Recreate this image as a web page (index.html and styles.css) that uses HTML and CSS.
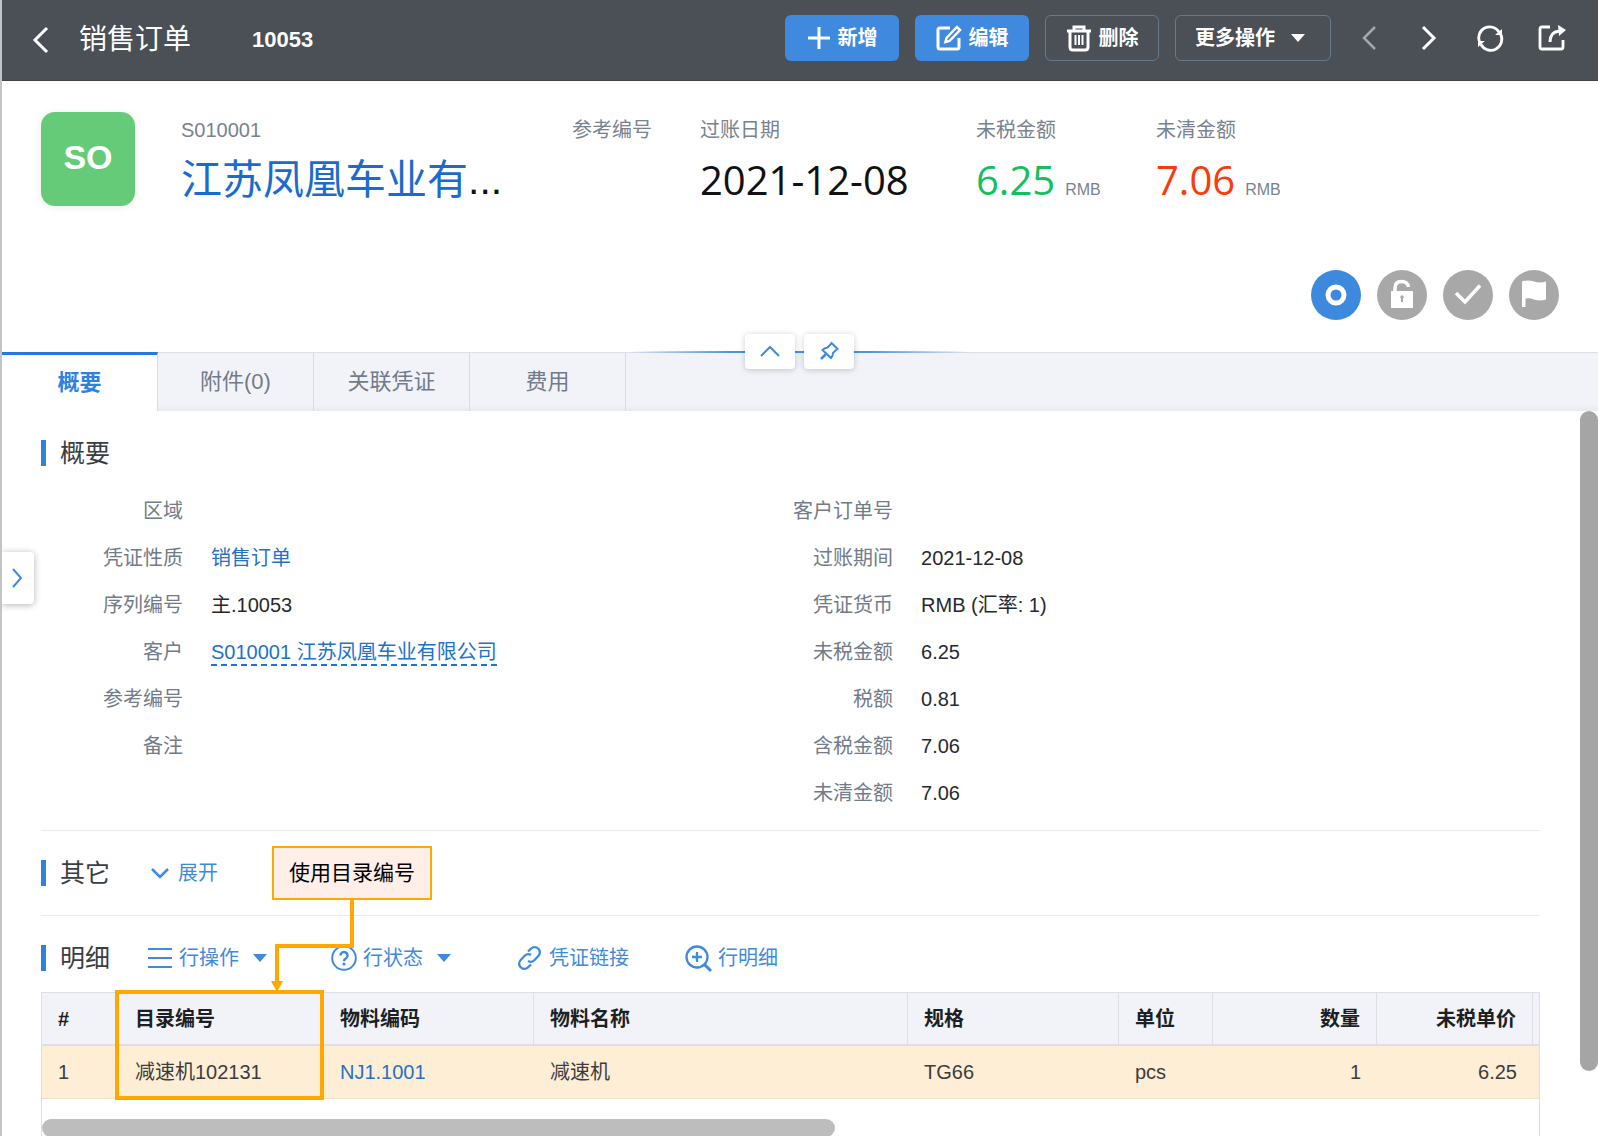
FILE: index.html
```html
<!DOCTYPE html>
<html lang="zh-CN">
<head>
<meta charset="utf-8">
<meta name="viewport" content="width=device-width, initial-scale=1">
<title>销售订单 10053</title>
<link rel="stylesheet" href="styles.css">
</head>
<body>
<div class="app">
  <header class="topbar">
    <button class="icon-btn back" aria-label="返回"><svg width="18" height="28" viewBox="0 0 18 28"><path d="M15 2 3 14l12 12" stroke-width="3"/></svg></button>
    <h1 class="topbar-title">销售订单</h1>
    <span class="topbar-no">10053</span>
    <div class="actions">
      <button class="btn btn-primary"><svg width="24" height="24" viewBox="0 0 24 24"><path d="M12 1v22M1 12h22" stroke-width="3"/></svg>新增</button>
      <button class="btn btn-primary"><svg width="26" height="26" viewBox="0 0 26 26"><path d="M14 3H4Q2 3 2 5v17q0 2 2 2h17q2 0 2-2v-9" stroke-width="3"/><path d="M9.500 17 10.500 13 21 2l3 3-10.500 11z" stroke-width="2.500"/></svg>编辑</button>
      <button class="btn btn-outline"><svg width="26" height="26" viewBox="0 0 26 26"><path d="M1 6h24" stroke-width="3"/><path d="M8 5V2h10v3M4 6v16q0 3 3 3h12q3 0 3-3V6" stroke-width="3"/><path d="M9.500 10v10M13 10v10M16.500 10v10" stroke-width="2"/></svg>删除</button>
      <button class="btn btn-outline btn-more">更多操作<i class="caret"></i></button>
    </div>
    <nav class="pager">
      <button class="icon-btn dim" aria-label="上一条"><svg width="26" height="28" viewBox="0 0 26 28"><path d="M19 3 8 14l11 11" stroke-width="2.500"/></svg></button>
      <button class="icon-btn" aria-label="下一条"><svg width="26" height="28" viewBox="0 0 26 28"><path d="M7 3l11 11L7 25" stroke-width="3"/></svg></button>
      <button class="icon-btn" aria-label="刷新"><svg width="28" height="28" viewBox="0 0 28 28"><path d="M3.500 18A11 11 0 0 1 23 8M24.500 10a11 11 0 0 1-19.500 10.500" stroke-width="2.800"/><path d="M26 5v6h-7zM2 23v-6h7z" fill="currentColor" stroke="none"/></svg></button>
      <button class="icon-btn" aria-label="导出"><svg width="28" height="28" viewBox="0 0 28 28"><path d="M12 3H4Q2 3 2 5v18q0 2 2 2h19q2 0 2-2v-7" stroke-width="2.800"/><path d="M12 18Q12 8 21 7" stroke-width="3"/><path d="M20 1l8 5-7 6z" fill="currentColor" stroke="none"/></svg></button>
    </nav>
  </header>

  <section class="summary">
    <div class="summary-main">
      <div class="logo">SO</div>
      <div class="fact fact-name"><span class="fact-label">S010001</span><div class="fact-value customer"><a href="#">江苏凤凰车业有</a>...</div></div>
      <div class="fact fact-ref"><span class="fact-label">参考编号</span></div>
      <div class="fact fact-date"><span class="fact-label">过账日期</span><div class="fact-value">2021-12-08</div></div>
      <div class="fact fact-net"><span class="fact-label">未税金额</span><div class="fact-value green">6.25<small>RMB</small></div></div>
      <div class="fact"><span class="fact-label">未清金额</span><div class="fact-value red">7.06<small>RMB</small></div></div>
    </div>
    <div class="statuses">
      <span class="status on"><svg width="50" height="50" viewBox="0 0 50 50"><circle cx="25" cy="25" r="8" stroke-width="5"/></svg></span>
      <span class="status"><svg width="50" height="50" viewBox="0 0 50 50"><path d="M18 22v-4q0-6.500 6.500-6.500 6 0 7 5.500" stroke-width="3.500"/><path d="M14 21h22v17H14z" fill="currentColor" stroke="none"/><path d="M24 32v-3.500a1.700 1.700 0 1 1 2 0V32z" fill="#a8a8a8" stroke="none"/></svg></span>
      <span class="status"><svg width="50" height="50" viewBox="0 0 50 50"><path d="M13 23l9 9 15-16.500" stroke-width="3.500"/></svg></span>
      <span class="status"><svg width="50" height="50" viewBox="0 0 50 50"><path d="M13 11.500q6-2 12 0t12 0v18q-6 2-12 0-4-2-8.500-1V37H13z" fill="currentColor" stroke="none"/></svg></span>
    </div>
  </section>

  <nav class="tabs">
    <button class="tab active">概要</button><button class="tab">附件(0)</button><button class="tab">关联凭证</button><button class="tab">费用</button>
    <div class="fold">
      <button class="fold-btn" aria-label="收起"><svg width="20" height="14" viewBox="0 0 20 14"><path d="M1 11l9-9 9 9" stroke-width="2"/></svg></button>
      <button class="fold-btn" aria-label="固定"><svg width="20" height="20" viewBox="0 0 20 20"><path d="M12.500 1l6 6-2 1.500L14 11q0 3-2 5L3.500 8q2-2 5-2.500L11 3z" stroke-width="2"/><path d="M7 12l-5 5" stroke-width="2.500"/></svg></button>
    </div>
  </nav>

  <main class="body">
    <button class="drawer" aria-label="展开侧栏"><svg width="12" height="20" viewBox="0 0 12 20"><path d="M2 1l8 9-8 9" stroke-width="2"/></svg></button>
    <div class="content">
      <section class="section section-form">
        <h2 class="section-title">概要</h2>
        <div class="form">
          <dl class="fields">
            <dt>区域</dt><dd></dd>
            <dt>凭证性质</dt><dd><a href="#">销售订单</a></dd>
            <dt>序列编号</dt><dd>主.10053</dd>
            <dt>客户</dt><dd><a href="#" class="dashed">S010001 江苏凤凰车业有限公司</a></dd>
            <dt>参考编号</dt><dd></dd>
            <dt>备注</dt><dd></dd>
          </dl>
          <dl class="fields">
            <dt>客户订单号</dt><dd></dd>
            <dt>过账期间</dt><dd>2021-12-08</dd>
            <dt>凭证货币</dt><dd>RMB (汇率: 1)</dd>
            <dt>未税金额</dt><dd>6.25</dd>
            <dt>税额</dt><dd>0.81</dd>
            <dt>含税金额</dt><dd>7.06</dd>
            <dt>未清金额</dt><dd>7.06</dd>
          </dl>
        </div>
      </section>

      <section class="section section-other">
        <div class="section-head">
          <h2 class="section-title">其它</h2>
          <button class="tool tool-expand"><svg width="18" height="12" viewBox="0 0 18 12"><path d="M1 2l8 8 8-8" stroke-width="2.500"/></svg>展开</button>
        </div>
      </section>

      <section class="section section-lines">
        <div class="section-head">
          <h2 class="section-title">明细</h2>
          <div class="tools">
            <button class="tool tool-rows"><svg width="26" height="26" viewBox="0 0 26 26"><path d="M1 4h24M1 13h24M1 22h24" stroke-width="2"/></svg>行操作<i class="caret"></i></button>
            <button class="tool tool-state"><svg width="26" height="26" viewBox="0 0 26 26"><circle cx="13" cy="13" r="11.800" stroke-width="2"/><path d="M9.500 10.500a3.500 3.500 0 1 1 5.500 2.800q-2 1.200-2 3" stroke-width="2.500"/><circle cx="13" cy="19" r="1.600" fill="currentColor" stroke="none"/></svg>行状态<i class="caret"></i></button>
            <button class="tool tool-link"><svg width="26" height="26" viewBox="0 0 26 26"><path d="M11 6.500l3-2.800a5 5 0 0 1 7.300 0 5 5 0 0 1 0 7.300l-4 4.200a5 5 0 0 1-6.300.8M14 19.500l-3 2.800a5 5 0 0 1-7.300 0 5 5 0 0 1 0-7.300l4-4.200a5 5 0 0 1 6.300-.8" stroke-width="2.300"/></svg>凭证链接</button>
            <button class="tool"><svg width="27" height="27" viewBox="0 0 27 27"><circle cx="12" cy="12" r="10.500" stroke-width="2.300"/><path d="M12 7v10M7 12h10" stroke-width="2.300"/><path d="M19.500 19.500L26 26" stroke-width="3"/></svg>行明细</button>
          </div>
        </div>

        <div class="grid">
          <table>
            <colgroup><col class="c-no"><col class="c-cat"><col class="c-code"><col><col class="c-spec"><col class="c-unit"><col class="c-qty"><col class="c-price"><col class="c-end"></colgroup>
            <thead><tr><th>#</th><th>目录编号</th><th>物料编码</th><th>物料名称</th><th>规格</th><th>单位</th><th class="num">数量</th><th class="num">未税单价</th><th class="end"></th></tr></thead>
            <tbody><tr><td>1</td><td>减速机102131</td><td><a href="#">NJ1.1001</a></td><td>减速机</td><td>TG66</td><td>pcs</td><td class="num">1</td><td class="num">6.25</td><td class="end"></td></tr></tbody>
          </table>
          <div class="hscroll"></div>
          <div class="highlight"></div>
        </div>

        <div class="callout">使用目录编号</div>
        <svg class="connector" width="92" height="95" viewBox="0 0 92 95"><path d="M80 0v48H5v38" fill="none" stroke="#ffa800" stroke-width="4"/><path d="M-1 83h12L5 94z" fill="#ffa800" stroke="none"/></svg>
      </section>
    </div>
    <div class="vscroll"></div>
  </main>
</div>
</body>
</html>
```
FILE: styles.css
```css
* { box-sizing: border-box; }
body {
  margin: 0;
  font: 20px/30px "Liberation Sans", "Noto Sans CJK SC", sans-serif;
  color: #262a2e;
  background: #fff;
}
h1, h2, dl, dd { margin: 0; font-weight: 400; }
a { color: #2272cc; text-decoration: none; }
button { font: inherit; color: inherit; background: none; border: 0; padding: 0; cursor: pointer; }
svg { display: block; flex: none; fill: none; stroke: currentColor; overflow: visible; }

.app {
  height: 100vh;
  display: flex;
  flex-direction: column;
  overflow: hidden;
  border-left: 2px solid #c2c4c6;
}
.caret {
  width: 0;
  height: 0;
  border: 7px solid transparent;
  border-top: 8px solid currentColor;
  border-bottom: 0;
}

/* Top bar */
.topbar {
  flex: none;
  height: 81px;
  display: flex;
  align-items: center;
  padding: 0 32px 4px 30px;
  color: #fff;
  background: #4a5056;
  border-bottom: 1px solid #3d4349;
}
.back { padding-top: 4px; }
.topbar-title { margin-left: 29px; padding-top: 4px; font-size: 28px; line-height: 40px; }
.topbar-no { margin-left: 61px; padding-top: 4px; font-size: 22px; font-weight: 700; }
.actions { display: flex; gap: 16px; margin-left: auto; }
.btn {
  display: flex;
  align-items: center;
  justify-content: center;
  gap: 7px;
  width: 114px;
  height: 46px;
  border-radius: 6px;
  font-weight: 700;
}
.btn-primary { background: #3f8ade; }
.btn-outline { border: 1px solid #66788c; }
.btn-more { width: 156px; justify-content: space-between; padding: 0 25px 0 19px; }
.pager { display: flex; align-items: center; gap: 34px; margin-left: 25px; }
.dim { opacity: .5; }

/* Summary */
.summary {
  flex: none;
  height: 271px;
  display: flex;
  flex-direction: column;
  justify-content: space-between;
  padding: 31px 39px 32px 39px;
}
.summary-main { display: flex; }
.logo {
  width: 94px;
  height: 94px;
  margin-right: 46px;
  border-radius: 14px;
  background: #66cb79;
  box-shadow: 0 1px 8px rgba(0, 0, 0, .08);
  color: #fff;
  font-size: 34px;
  font-weight: 700;
  line-height: 90px;
  text-align: center;
}
.fact { padding-top: 3px; }
.fact-name { width: 391px; }
.fact-ref { width: 128px; }
.fact-date { width: 276px; }
.fact-net { width: 180px; }
.fact-label { display: block; color: #79828f; }
.fact-value {
  margin-top: 5px;
  font: 40px/60px "Open Sans", "Noto Sans CJK SC", sans-serif;
  color: #111;
}
.customer {
  font-family: "Liberation Sans", "Noto Sans CJK SC", sans-serif;
  font-size: 41px;
  white-space: nowrap;
}
.customer a { color: #1a6bcc; }
.green { color: #14bf5f; }
.red { color: #fa3c0c; }
.fact-value small { margin-left: 10px; font: 16px/20px "Liberation Sans", sans-serif; color: #79828f; }
.statuses { display: flex; justify-content: flex-end; gap: 16px; }
.status { width: 50px; height: 50px; border-radius: 50%; background: #a8a8a8; color: #fff; }
.status.on { background: #3c89de; }

/* Tabs */
.tabs {
  position: relative;
  flex: none;
  height: 59px;
  display: flex;
  border-top: 1px solid #dcdfe7;
  background: linear-gradient(#f1f3f8 52px, #e8eaef);
}
.tab {
  width: 156px;
  border-right: 1px solid #d9dce5;
  font-size: 22px;
  color: #727b88;
}
.tab.active {
  margin-top: -1px;
  border-top: 3px solid #2878dc;
  background: #fff;
  color: #2f80df;
  font-weight: 700;
}
.fold {
  position: absolute;
  top: -19px;
  left: 50%;
  width: 340px;
  margin-left: -171px;
  display: flex;
  justify-content: center;
  gap: 9px;
  background: linear-gradient(90deg, transparent, #4a92e4 30%, #4a92e4 70%, transparent) 0 17px / 100% 2px no-repeat;
}
.fold-btn {
  display: flex;
  align-items: center;
  justify-content: center;
  width: 50px;
  height: 35px;
  border-radius: 4px;
  background: #fff;
  box-shadow: 0 1px 6px rgba(0, 0, 0, .2);
  color: #3f8ade;
}

/* Body */
.body { position: relative; flex: 1; min-height: 0; display: flex; }
.content { flex: 1; min-width: 0; padding: 0 40px 0 39px; }
.vscroll { width: 18px; height: 91%; border-radius: 9px; background: #a5a5a5; }
.drawer {
  position: absolute;
  top: 141px;
  left: 0;
  display: flex;
  align-items: center;
  padding-left: 9px;
  width: 32px;
  height: 52px;
  border-radius: 0 4px 4px 0;
  background: #fff;
  box-shadow: 0 1px 7px rgba(0, 0, 0, .3);
  color: #3f8ade;
}
.section { padding-top: 24px; }
.section-form, .section-other { border-bottom: 1px solid #e9eaec; }
.section-form { padding-bottom: 14px; }
.section-other { padding-bottom: 24px; }
.section-head { display: flex; align-items: center; }
.section-title {
  display: flex;
  align-items: center;
  gap: 14px;
  font-size: 25px;
  line-height: 36px;
  color: #3a3d42;
}
.section-title::before { content: ""; width: 5px; height: 26px; background: #2f80df; }
.form { display: grid; grid-template-columns: 9fr 10fr; margin-top: 16px; }
.fields {
  display: grid;
  grid-template-columns: 142px 1fr;
  grid-auto-rows: 47px;
  column-gap: 28px;
  align-content: start;
  align-items: center;
}
.fields dt { color: #727b88; text-align: right; }
.dashed { padding-bottom: 1px; border-bottom: 2px dashed #2272cc; }

.tools { display: flex; margin-left: 37px; }
.tool { display: flex; align-items: center; gap: 6px; color: #3f8ade; }
.tool-expand { margin-left: 41px; gap: 9px; }
.tool .caret { margin-left: 8px; }
.tool-rows { width: 184px; }
.tool-state { width: 186px; }
.tool-link { width: 168px; }

/* Line table */
.section-lines { position: relative; }
.grid {
  position: relative;
  height: 180px;
  margin-top: 16px;
  border: 1px solid #dcdfe7;
}
table { width: 100%; table-layout: fixed; border-collapse: separate; border-spacing: 0; }
th, td { height: 53px; padding: 0 16px; text-align: left; white-space: nowrap; }
th {
  background: #f1f3f8;
  border-right: 1px solid #dcdfe7;
  border-bottom: 2px solid #dcdfe7;
  color: #1c1f23;
}
td { background: #ffeed6; border-bottom: 1px solid #eee0c6; color: #3c3c3c; }
.num { text-align: right; }
.end { padding: 0; border-right: 0; }
.c-no { width: 77px; }
.c-cat { width: 205px; }
.c-code { width: 210px; }
.c-spec { width: 211px; }
.c-unit { width: 94px; }
.c-qty { width: 164px; }
.c-price { width: 156px; }
.c-end { width: 6px; }
.hscroll { width: 53%; height: 18px; margin-top: 20px; border-radius: 9px; background: #bdbdbd; }

/* Annotation over the table */
.highlight {
  position: absolute;
  top: -3px;
  left: 73px;
  width: 209px;
  height: 110px;
  border: 4px solid #ffa800;
}
.callout {
  position: absolute;
  top: -70px;
  left: 231px;
  padding: 10px 15px;
  border: 2px solid #ffa800;
  background: #ffefe8;
  color: #000;
  font-size: 21px;
}
.connector { position: absolute; top: -18px; left: 231px; }
```
